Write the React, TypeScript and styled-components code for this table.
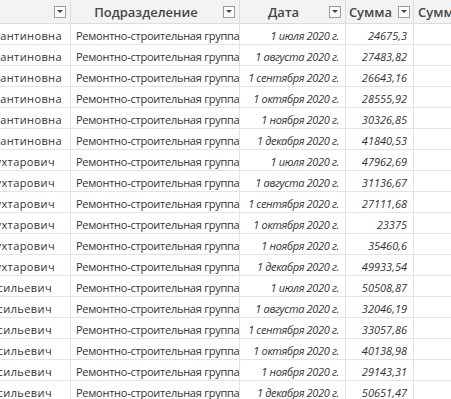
import React from "react";
import styled, { createGlobalStyle } from "styled-components";

const Global = createGlobalStyle`
  html, body { margin: 0; padding: 0; background: #ffffff; }
  body { font-family: "Open Sans", "Noto Sans", "Liberation Sans", sans-serif; overflow: hidden; }
`;

const Grid = styled.div`
  display: grid;
  grid-template-columns: 71px 169px 106px 68px 60px;
  width: 451px;
  overflow: hidden;
`;

const HeadCell = styled.div<{ $align?: string }>`
  height: 24px;
  background: #f3f3f3;
  border-right: 1px solid #dcdcdc;
  border-bottom: 1px solid #dcdcdc;
  display: flex;
  align-items: center;
  justify-content: ${(p) => p.$align || "center"};
  gap: 6px;
  padding: 0 4px 0 4px;
  box-sizing: border-box;
  font-size: 13px;
  font-weight: 600;
  color: #474747;
  white-space: nowrap;
  overflow: hidden;
  min-width: 0;
`;

const HeadLabel = styled.span`
  flex: 1;
  text-align: center;
`;

const Drop = styled.span`
  flex: none;
  width: 10px;
  height: 10px;
  border: 1px solid #9a9a9a;
  background: #fbfbfb;
  display: flex;
  align-items: center;
  justify-content: center;
  &::after {
    content: "";
    border-left: 3px solid transparent;
    border-right: 3px solid transparent;
    border-top: 3px solid #444;
  }
`;

const Cell = styled.div<{ $align?: string; $italic?: boolean; $pr?: number; $ls?: number }>`
  border-right: 1px solid #e3e3e3;
  border-bottom: 1px solid #e3e3e3;
  display: flex;
  align-items: center;
  justify-content: ${(p) => p.$align || "flex-start"};
  padding: 2px ${(p) => (p.$pr ?? 6)}px 0 5px;
  box-sizing: border-box;
  height: 21px;
  font-size: 11px;
  letter-spacing: ${(p) => p.$ls ?? -0.25}px;
  font-style: ${(p) => (p.$italic ? "italic" : "normal")};
  color: #333;
  white-space: nowrap;
  overflow: hidden;
  min-width: 0;
`;

const groups = [
  { name: "Петрова Анна Константиновна", pr: 8 },
  { name: "Сафин Ринат Мухтарович", pr: 15 },
  { name: "Ковалёв Игорь Васильевич", pr: 18 },
];

const months = ["июля", "августа", "сентября", "октября", "ноября", "декабря"];
const sums = [
  "24675,3", "27483,82", "26643,16", "28555,92", "30326,85", "41840,53",
  "47962,69", "31136,67", "27111,68", "23375", "35460,6", "49933,54",
  "50508,87", "32046,19", "33057,86", "40138,98", "29143,31", "50651,47",
];

const rows = sums.map((s, i) => ({
  g: groups[Math.floor(i / 6)],
  date: `1 ${months[i % 6]} 2020 г.`,
  sum: s,
}));

export default function App() {
  return (
    <>
      <Global />
      <Grid>
        <HeadCell $align="flex-end"><Drop /></HeadCell>
        <HeadCell><HeadLabel>Подразделение</HeadLabel><Drop /></HeadCell>
        <HeadCell><HeadLabel>Дата</HeadLabel><Drop /></HeadCell>
        <HeadCell><HeadLabel>Сумма</HeadLabel><Drop /></HeadCell>
        <HeadCell $align="flex-start">Сумма нарастающим итогом</HeadCell>
        {rows.map((r, i) => (
          <React.Fragment key={i}>
            <Cell $align="flex-end" $pr={r.g.pr} $ls={0.4}>{r.g.name}</Cell>
            <Cell $pr={1}>Ремонтно-строительная группа</Cell>
            <Cell $align="flex-end" $italic $ls={-0.35}>{r.date}</Cell>
            <Cell $align="flex-end" $italic $ls={0}>{r.sum}</Cell>
            <Cell />
          </React.Fragment>
        ))}
      </Grid>
    </>
  );
}
